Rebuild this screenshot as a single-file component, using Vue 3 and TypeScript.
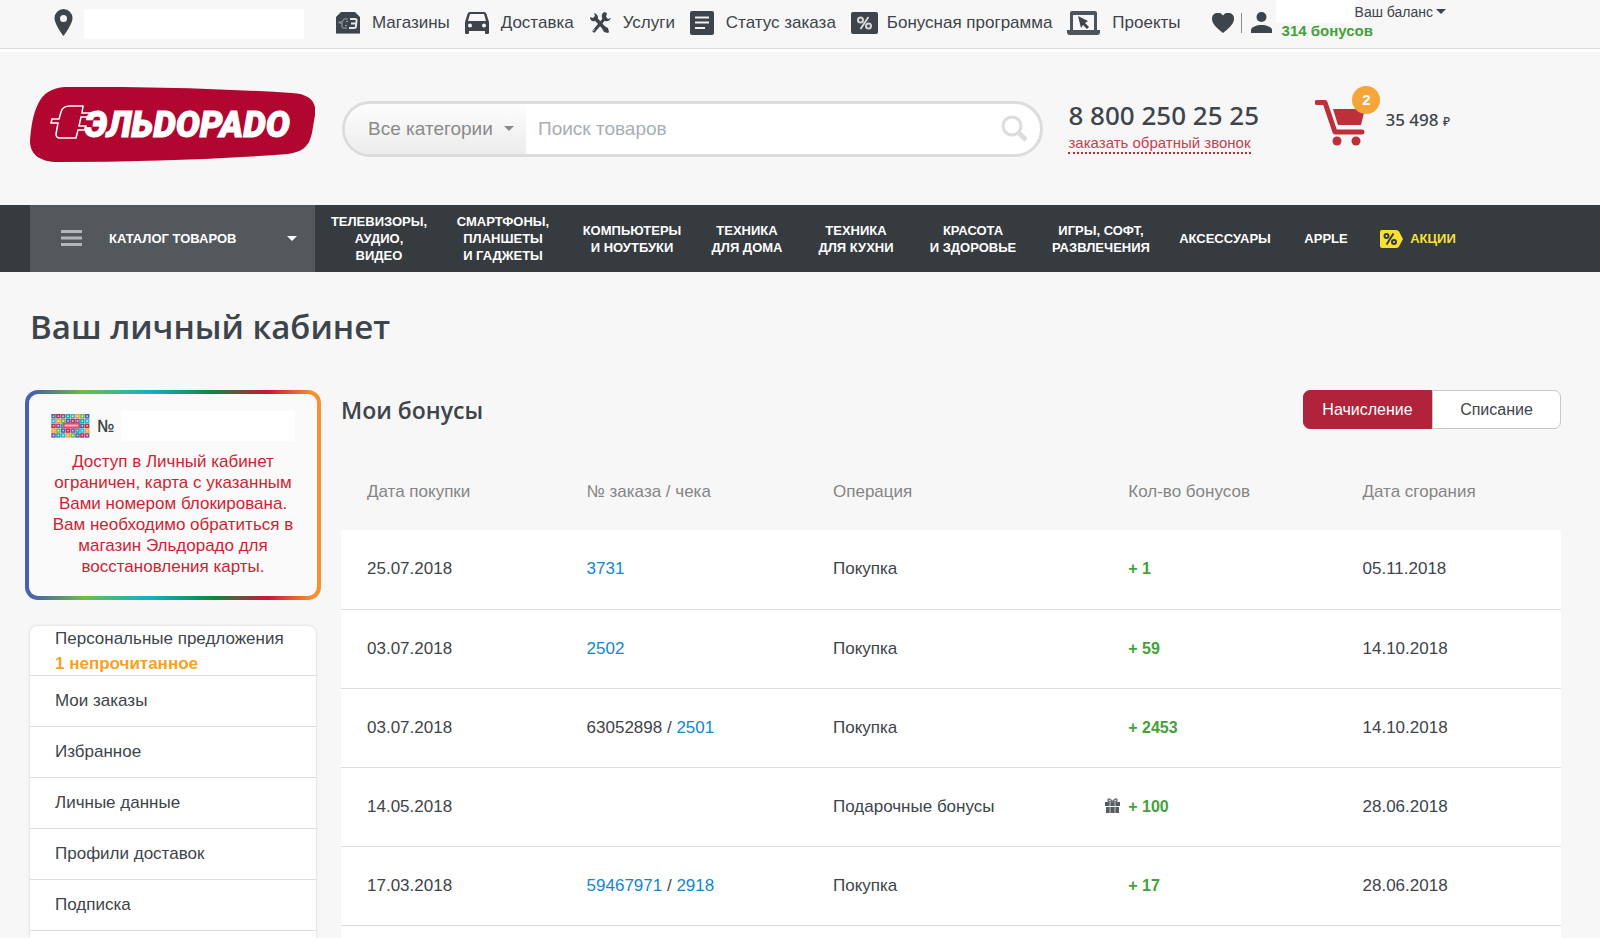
<script setup lang="ts">
import { ref } from 'vue'

interface Service { id: string; label: string }
interface Operation {
  date: string
  order?: string
  orderLinked?: boolean
  receipt?: string
  type: string
  bonus: string
  gift?: boolean
  expires: string
}

const services: Service[] = [
  { id: 'shop', label: 'Магазины' },
  { id: 'car', label: 'Доставка' },
  { id: 'tools', label: 'Услуги' },
  { id: 'status', label: 'Статус заказа' },
  { id: 'bonus', label: 'Бонусная программа' },
  { id: 'laptop', label: 'Проекты' },
]

const categories: string[][] = [
  ['ТЕЛЕВИЗОРЫ,', 'АУДИО,', 'ВИДЕО'],
  ['СМАРТФОНЫ,', 'ПЛАНШЕТЫ', 'И ГАДЖЕТЫ'],
  ['КОМПЬЮТЕРЫ', 'И НОУТБУКИ'],
  ['ТЕХНИКА', 'ДЛЯ ДОМА'],
  ['ТЕХНИКА', 'ДЛЯ КУХНИ'],
  ['КРАСОТА', 'И ЗДОРОВЬЕ'],
  ['ИГРЫ, СОФТ,', 'РАЗВЛЕЧЕНИЯ'],
  ['АКСЕССУАРЫ'],
  ['APPLE'],
]

const menu: string[] = ['Мои заказы', 'Избранное', 'Личные данные', 'Профили доставок', 'Подписка']

const columns: string[] = ['Дата покупки', '№ заказа / чека', 'Операция', 'Кол-во бонусов', 'Дата сгорания']

const operations: Operation[] = [
  { date: '25.07.2018', receipt: '3731', type: 'Покупка', bonus: '+ 1', expires: '05.11.2018' },
  { date: '03.07.2018', receipt: '2502', type: 'Покупка', bonus: '+ 59', expires: '14.10.2018' },
  { date: '03.07.2018', order: '63052898', receipt: '2501', type: 'Покупка', bonus: '+ 2453', expires: '14.10.2018' },
  { date: '14.05.2018', type: 'Подарочные бонусы', bonus: '+ 100', gift: true, expires: '28.06.2018' },
  { date: '17.03.2018', order: '59467971', orderLinked: true, receipt: '2918', type: 'Покупка', bonus: '+ 17', expires: '28.06.2018' },
]

const tabs: string[] = ['Начисление', 'Списание']
const activeTab = ref('Начисление')
const query = ref('')

const palette = ['#3f63ad', '#f6a03a', '#19a79b', '#d2243f', '#6cbe45', '#2fb4d8', '#8a4a9c']
const tiles = Array.from({ length: 40 }, (_, i) => ({
  x: (i % 8) * 5,
  y: Math.floor(i / 8) * 5,
  fill: palette[(i * 3 + Math.floor(i / 8) * 2) % palette.length],
}))
</script>

<template>
  <div class="page">
    <div class="topbar">
      <svg class="pin" viewBox="0 0 18 27" aria-hidden="true">
        <path fill-rule="evenodd" d="M9 0a9 9 0 0 0-9 9c0 6.500 9 18 9 18s9-11.500 9-18a9 9 0 0 0-9-9zm0 6a3.500 3.500 0 1 1 0 7 3.500 3.500 0 0 1 0-7z" />
      </svg>
      <span class="city"></span>
      <nav class="services">
        <a v-for="s in services" :key="s.id" href="#" :class="['service', s.id]">
          <svg v-if="s.id === 'shop'" width="24" height="22" viewBox="0 0 24 22" aria-hidden="true">
            <path d="M5 0h14l5 5v17H0V5z" />
            <path d="M12 7H8Q7 7 6.500 10H3v1h3v4q0 1 1 1h4M12 9.500h-2M11 13.500H9" fill="none" stroke="#9ea3a6" stroke-width="1" />
            <path d="M14 7h5q2 0 1.500 2L20 14q0 2-2 2h-5M15 11.500h5" fill="none" stroke="#e6e7e8" stroke-width="2" />
            <path d="M0 21.500h24" stroke="#8d9296" />
          </svg>
          <svg v-else-if="s.id === 'car'" width="24" height="22" viewBox="0 0 24 22" aria-hidden="true">
            <path fill-rule="evenodd" d="M5 0h14q2 0 2.500 2L24 10v11q0 1-1 1h-2q-1 0-1-1v-2H4v2q0 1-1 1H1q-1 0-1-1V10L2.500 2Q3 0 5 0zm0 2L3 9h18l-2-7zM5 11.500a2 2 0 1 0 0 4 2 2 0 0 0 0-4zm14 0a2 2 0 1 0 0 4 2 2 0 0 0 0-4z" />
          </svg>
          <svg v-else-if="s.id === 'tools'" width="22" height="22" viewBox="0 0 22 22" aria-hidden="true">
            <path d="M6 6l10 11" stroke="#3d444b" stroke-width="3.500" />
            <path d="M16 6L5 19" stroke="#3d444b" stroke-width="3" stroke-linecap="round" />
            <path d="M5 1l1 3-2 2-3-1q0 4 4 4.500l4-3.500Q9 2 5 1zM15 0q-3 2-2 6l3 3q4 1 6-3l-3 1-2-2 1-4zM15 14l4 2 1 4-1 1-4-1-2-4z" />
            <path d="M4 19l2-2" stroke="#b5b8bb" stroke-width="1" />
          </svg>
          <svg v-else-if="s.id === 'status'" width="24" height="24" viewBox="0 0 24 24" aria-hidden="true">
            <rect width="24" height="24" rx="2" />
            <path d="M5 6.500h14M5 11.500h14M5 17h10" stroke="#f0f0f0" stroke-width="2" />
          </svg>
          <svg v-else-if="s.id === 'bonus'" width="27" height="22" viewBox="0 0 27 22" aria-hidden="true">
            <rect width="27" height="22" rx="2" />
            <g fill="none" stroke="#d4d6d8" stroke-width="2">
              <circle cx="9.500" cy="8" r="2.500" /><circle cx="17.500" cy="14" r="2.500" /><path d="M17.500 5l-8 12" />
            </g>
          </svg>
          <svg v-else width="33" height="24" viewBox="0 0 33 24" aria-hidden="true">
            <path fill-rule="evenodd" d="M5 0h23q2 0 2 2v17h3v2q0 3-3 3H3q-3 0-3-3v-2h3V2q0-2 2-2zm1 4v15h21V4z" fill="#4d545a" />
            <path d="M11 5l10 5-3 2 4 4-2 2-4-4-2 3z" />
          </svg>
          <span>{{ s.label }}</span>
        </a>
      </nav>
      <a class="fav" href="#" aria-label="Избранное">
        <svg width="22" height="20" viewBox="0 0 22 20" aria-hidden="true">
          <path d="M11 20C5 15 0 11 0 6a6 6 0 0 1 11-3.500A6 6 0 0 1 22 6c0 5-5 9-11 14z" />
        </svg>
      </a>
      <div class="account">
        <svg width="21" height="21" viewBox="0 0 21 21" aria-hidden="true">
          <circle cx="10.500" cy="5" r="5" /><path d="M0 21v-3c0-3 6-5 10.500-5S21 15 21 18v3z" />
        </svg>
        <div class="balance">
          <div class="balance-row">
            <span class="user"></span>
            <button type="button" class="balance-btn">Ваш баланс<i class="caret"></i></button>
          </div>
          <b>314 бонусов</b>
        </div>
      </div>
    </div>

    <header class="header">
      <a class="logo" href="#" aria-label="Эльдорадо">
        <svg viewBox="0 0 285 76" aria-hidden="true">
          <path fill="#b0062f" d="M35 0Q150-1 262 6c18 1 25 9 23 22l-3 18c-3 14-10 19-24 21Q150 75 25 75C8 74 0 66 0 54 1 40 3 27 8 17 13 6 22 1 35 0z" />
          <path d="M53 19H40c-5 0-8 2-9 6l-2 7h-7l-1 4h7l-2 11c0 3 1 4 4 4h16l2-8h7l1-4h-7l2-9h8l1-4h-8z" fill="none" stroke="#fff" stroke-width="1.500" />
          <text x="55" y="50">ЭЛЬDOPADO</text>
        </svg>
      </a>
      <form class="search" @submit.prevent>
        <label class="picker">
          <select aria-label="Категория"><option>Все категории</option></select>
          <i class="caret"></i>
        </label>
        <input v-model="query" type="search" placeholder="Поиск товаров" aria-label="Поиск товаров" />
        <button type="submit" aria-label="Найти">
          <svg width="27" height="27" viewBox="0 0 27 27" aria-hidden="true">
            <circle cx="11" cy="11" r="9" fill="none" stroke="#dcdcdc" stroke-width="3" />
            <path d="M17 17l8 8" stroke="#dcdcdc" stroke-width="5" />
          </svg>
        </button>
      </form>
      <div class="phone">
        <span class="number">8 800 250 25 25</span>
        <a href="#">заказать обратный звонок</a>
      </div>
      <a class="cart" href="#">
        <span class="cart-icon">
          <svg width="50" height="46" viewBox="0 0 50 46" aria-hidden="true">
            <path d="M2 2.500h8L20 32h27" fill="none" stroke="#bd2f3b" stroke-width="5" stroke-linecap="round" stroke-linejoin="round" />
            <path d="M18 9h32l-4 16H23z" fill="#bd2f3b" />
            <circle cx="22" cy="41" r="4.500" fill="#bd2f3b" /><circle cx="41" cy="41" r="4.500" fill="#bd2f3b" />
          </svg>
          <span class="badge">2</span>
        </span>
        <span class="sum">35 498 <small>₽</small></span>
      </a>
    </header>

    <nav class="nav">
      <button type="button" class="catalog">
        <svg width="21" height="17" viewBox="0 0 21 17" aria-hidden="true"><path d="M0 1.500h21M0 8h21M0 14.500h21" stroke="#b4b7b9" stroke-width="3" /></svg>
        <span>КАТАЛОГ ТОВАРОВ</span>
        <i class="caret"></i>
      </button>
      <div class="cats">
        <a v-for="c in categories" :key="c.join(' ')" href="#">
          <span v-for="line in c" :key="line">{{ line }}</span>
        </a>
        <a href="#" class="promo">
          <svg width="23" height="18" viewBox="0 0 23 18" aria-hidden="true">
            <path d="M2 0h14q2 0 3 1.500l4 7.500-4 7.500q-1 1.500-3 1.500H2q-2 0-2-2V2q0-2 2-2z" fill="#f9e22f" />
            <g fill="none" stroke="#363b3f" stroke-width="2"><circle cx="6.500" cy="6" r="2" /><circle cx="14" cy="12" r="2" /><path d="M13.500 3.500l-7 11" /></g>
          </svg>
          <span>АКЦИИ</span>
        </a>
      </div>
    </nav>

    <main class="content">
      <h1>Ваш личный кабинет</h1>
      <div class="layout">
        <aside class="side">
          <section class="card">
            <div class="card-head">
              <svg class="thumb" viewBox="0 0 40 25" aria-hidden="true">
                <rect width="40" height="25" fill="#e8eef0" />
                <template v-for="(t, i) in tiles" :key="i">
                  <rect :x="t.x" :y="t.y" width="4.600" height="4.600" :fill="t.fill" />
                  <circle :cx="t.x + 2.300" :cy="t.y + 2.300" r="1" fill="#fff" opacity=".7" />
                </template>
                <rect x="12" y="9" width="18" height="6" fill="#dc4f72" />
                <path d="M14 12h14" stroke="#f3b9c7" stroke-width="2" />
              </svg>
              <span class="num">№</span>
              <span class="card-no"></span>
            </div>
            <p>Доступ в Личный кабинет ограничен, карта с указанным Вами номером блокирована. Вам необходимо обратиться в магазин Эльдорадо для восстановления карты.</p>
          </section>
          <ul class="menu">
            <li class="first"><a href="#">Персональные предложения <b>1 непрочитанное</b></a></li>
            <li v-for="m in menu" :key="m"><a href="#">{{ m }}</a></li>
          </ul>
        </aside>

        <section class="bonuses">
          <div class="bonuses-head">
            <h2>Мои бонусы</h2>
            <div class="tabs">
              <button v-for="t in tabs" :key="t" type="button" :class="{ active: t === activeTab }" @click="activeTab = t">{{ t }}</button>
            </div>
          </div>
          <div class="sheet">
            <table>
              <thead>
                <tr><th v-for="c in columns" :key="c" scope="col">{{ c }}</th></tr>
              </thead>
              <tbody>
                <tr v-for="(o, i) in operations" :key="i">
                  <td>{{ o.date }}</td>
                  <td>
                    <template v-if="o.order"><a v-if="o.orderLinked" href="#">{{ o.order }}</a><template v-else>{{ o.order }}</template> / </template><a v-if="o.receipt" href="#">{{ o.receipt }}</a>
                  </td>
                  <td>{{ o.type }}</td>
                  <td class="amount">
                    <svg v-if="o.gift" width="15" height="15" viewBox="0 0 15 15" aria-hidden="true">
                      <path d="M0 4h15v4H0zM1 9h13v6H1z" fill="#555b62" />
                      <path d="M7 4Q3 4 3 2t3 0l1.500 2L9 2q3-2 3 0T8 4" fill="none" stroke="#6c7177" stroke-width="1.500" />
                      <path d="M5 4v11M10 4v11" stroke="#c9cbcd" />
                    </svg>
                    {{ o.bonus }}
                  </td>
                  <td>{{ o.expires }}</td>
                </tr>
              </tbody>
            </table>
          </div>
        </section>
      </div>
    </main>
  </div>
</template>

<style>
body { margin: 0; background: #f7f7f7; }
</style>

<style scoped>
.page {
  display: flex;
  flex-direction: column;
  min-height: 100vh;
  background: #f7f7f7;
  color: #3d444b;
  font-family: "Liberation Sans", Arial, sans-serif;
  font-size: 17px;
}
.page * { box-sizing: border-box; }
a { color: inherit; text-decoration: none; }
button { border: 0; padding: 0; background: none; color: inherit; font: inherit; cursor: pointer; }
svg { display: block; flex: none; fill: #3d444b; }
.caret {
  width: 0;
  height: 0;
  border: 5px solid transparent;
  border-top-color: currentColor;
  border-bottom: 0;
}

.topbar {
  display: flex;
  align-items: center;
  height: 52px;
  padding: 0 154px 4px 54px;
  border-bottom: 3px solid #fff;
  box-shadow: inset 0 -1px #dcdcdc;
}
.pin { width: 19px; height: 27px; }
.city { width: 220px; height: 30px; margin: 2px 32px 0 11px; background: #fff; }
.services { display: flex; flex: 1; align-items: center; justify-content: space-between; padding-right: 31px; }
.service { display: flex; align-items: center; gap: 12px; white-space: nowrap; }
.service.bonus { gap: 9px; }
.fav { padding-right: 7px; border-right: 1px solid #8a8e92; }
.account { display: flex; align-items: center; gap: 4px; margin-left: 9px; }
.balance { display: flex; flex-direction: column; height: 45px; }
.balance-row { display: flex; height: 23px; }
.user { width: 79px; background: #fff; }
.balance-btn { display: flex; align-items: center; gap: 3px; font-size: 14px; white-space: nowrap; }
.balance b { padding-left: 6px; color: #43a138; font-size: 15px; line-height: 15px; }

.header { display: flex; align-items: center; height: 153px; padding: 0 150px 0 30px; }
.logo { width: 285px; margin-bottom: 8px; }
.logo text { fill: #fff; stroke: #fff; font: italic 900 36px Roboto, "Liberation Sans", sans-serif; }
.search {
  display: flex;
  flex: 1;
  height: 56px;
  margin: 0 25px 0 27px;
  border: 3px solid #dcdcdc;
  border-radius: 28px;
  background: #fff;
  overflow: hidden;
}
.picker {
  display: flex;
  align-items: center;
  width: 181px;
  padding-left: 23px;
  color: #8a8a8a;
  background: linear-gradient(#fdfdfd, #ececec);
}
.picker select {
  width: 136px;
  border: 0;
  background: none;
  color: inherit;
  font: inherit;
  font-size: 19px;
  appearance: none;
}
.search input {
  flex: 1;
  min-width: 0;
  border: 0;
  padding: 0 12px;
  outline: 0;
  background: none;
  font: inherit;
  font-size: 19px;
  appearance: none;
}
.search input::placeholder { color: #a9aeb3; opacity: 1; }
.search button { padding-right: 12px; }
.phone { display: flex; flex-direction: column; align-items: flex-start; width: 247px; gap: 1px; padding-bottom: 6px; }
.number { font: 500 26px/36px "Noto Sans", sans-serif; white-space: nowrap; }
.phone a { border-bottom: 2px dotted #c2283c; color: #c5404f; font-size: 15px; line-height: 18px; }
.cart { display: flex; align-items: center; gap: 20px; padding-bottom: 12px; }
.cart-icon { position: relative; }
.badge {
  position: absolute;
  top: -14px;
  right: -15px;
  width: 28px;
  border-radius: 50%;
  background: #f7a43a;
  color: #fff;
  font-size: 15px;
  font-weight: bold;
  line-height: 28px;
  text-align: center;
}
.sum { padding-bottom: 4px; font: 500 17px/24px "Noto Sans", sans-serif; white-space: nowrap; }
.sum small { font-size: 12px; }

.nav { display: flex; height: 67px; padding: 0 141px 0 30px; background: #363b3f; color: #fff; font-size: 13px; font-weight: bold; line-height: 17px; }
.catalog { display: flex; align-items: center; width: 285px; padding: 0 18px 0 31px; background: #53585c; }
.catalog span { flex: 1; padding-left: 27px; text-align: left; }
.cats {
  display: grid;
  flex: 1;
  grid-template-columns: 128fr 120fr 138fr 92fr 126fr 108fr 148fr 100fr 102fr 82fr;
  align-items: center;
}
.cats a { display: flex; flex-direction: column; align-items: center; white-space: nowrap; }
.cats .promo { flex-direction: row; justify-content: center; gap: 7px; color: #f9e22f; }

.content { display: flex; flex: 1; flex-direction: column; padding: 0 39px 0 30px; }
h1 { margin: 30px 0 38px; font: 600 33px/50px "Open Sans", sans-serif; }
.layout { display: flex; flex: 1; gap: 25px; }
.side { display: flex; flex-direction: column; width: 286px; }
.card {
  margin: 0 -5px 26px;
  padding: 17px 22px 19px;
  border: 4px solid transparent;
  border-radius: 13px;
  background:
    linear-gradient(#fafafa, #fafafa) padding-box,
    linear-gradient(90deg, #4a62a8 3%, #6cbe45 20%, #17aecb 42%, #14843c 64%, #cc1538 82%, #f7902f 97%) border-box;
}
.card-head { display: flex; align-items: center; height: 30px; }
.thumb { width: 39px; height: 24px; }
.num { width: 24px; margin-left: 7px; font: 600 17px/24px "Open Sans", sans-serif; }
.card-no { flex: 1; height: 30px; background: #fff; }
.card p { margin: 10px -6px 0; color: #cf1f34; line-height: 21px; text-align: center; }
.menu {
  flex: 1;
  margin: 0;
  padding: 0;
  list-style: none;
  border-radius: 8px 8px 0 0;
  background: #fff;
  box-shadow: 0 0 3px #d0d0d0;
}
.menu li { height: 51px; padding-left: 25px; border-bottom: 1px solid #dedede; line-height: 50px; }
.menu .first { height: 50px; line-height: 25px; }
.menu b { display: block; color: #fb9f1e; }

.bonuses { display: flex; flex: 1; flex-direction: column; }
.bonuses-head { display: flex; align-items: center; justify-content: space-between; height: 39px; }
h2 { margin: 0; font: 600 23px/34px "Open Sans", sans-serif; }
.tabs { display: flex; width: 258px; height: 39px; border-radius: 7px; }
.tabs button { flex: 1; border: 1px solid #c8c8c8; border-radius: 0 7px 7px 0; background: #fff; font-size: 16px; }
.tabs button:first-child { border-radius: 7px 0 0 7px; }
.tabs .active { border-color: #b0233b; background: #b0233b; color: #fff; }
.sheet { flex: 1; margin-top: 23px; background: #fff; }
table { width: 100%; border-collapse: collapse; table-layout: fixed; }
th { height: 78px; padding: 2px 0 0 26px; background: #f7f7f7; color: #858585; font-weight: normal; text-align: left; }
th:nth-child(1) { width: 18%; }
th:nth-child(2) { width: 20.2%; }
th:nth-child(3) { width: 24.2%; }
th:nth-child(4) { width: 19.2%; }
td { height: 79px; padding: 0 0 0 26px; border-bottom: 1px solid #dedede; }
td a { color: #1286d3; }
.amount { position: relative; color: #43a138; font-size: 16px; font-weight: bold; }
.amount svg { position: absolute; top: 30px; left: 3px; }
</style>
